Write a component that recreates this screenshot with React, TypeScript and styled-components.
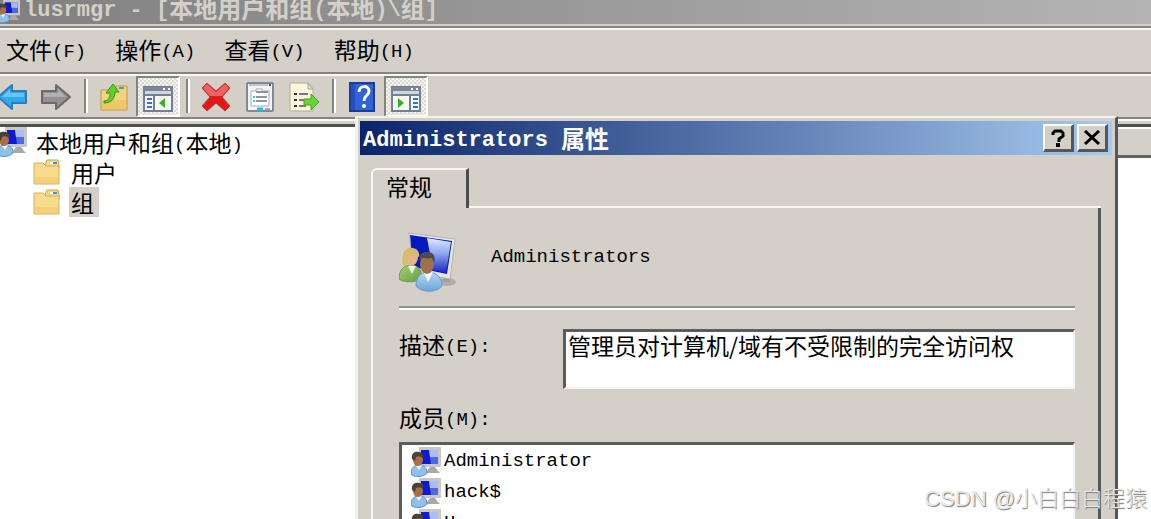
import React from 'react';
import styled, { createGlobalStyle, css } from 'styled-components';

const face = '#d4d0c8';
const cjk = '"Noto Sans CJK SC", sans-serif';

const GlobalStyle = createGlobalStyle`
  * { box-sizing: border-box; }
  body { margin: 0; background: ${face}; color: #000; font-family: ${cjk}; font-size: 23px; overflow: hidden; }
  button { font: inherit; color: inherit; background: none; border: 0; padding: 0; margin: 0; }
  svg { display: block; flex: none; }
`;

const Window = styled.main`
  position: relative;
  height: 100vh;
  display: flex;
  flex-direction: column;
  overflow: hidden;
  background: ${face};
`;

const Latin = styled.span<{ $strong?: boolean }>`
  font-family: "Liberation Mono", monospace;
  font-size: ${p => (p.$strong ? 22 : 19)}px;
  line-height: 1;
  vertical-align: 2px;
  white-space: pre;
`;

/* Sets the half-width characters of a string in the monospaced face. */
function Mixed({ text, strong }: { text: string; strong?: boolean }) {
  return (
    <>
      {text.split(/([\x20-\x7e]+)/).filter(Boolean).map((run, i) =>
        /^[\x20-\x7e]/.test(run) ? <Latin key={i} $strong={strong}>{run}</Latin> : run
      )}
    </>
  );
}

const TitleBar = styled.header`
  display: flex;
  gap: 4px;
  height: 24px;
  overflow: hidden;
  background: linear-gradient(90deg, #808080, #b4b4b4);
  color: ${face};
`;

const WindowTitle = styled.h1`
  margin: 0;
  font-size: 24px;
  font-weight: 700;
  line-height: 12px;
  white-space: nowrap;
`;

const IconSlot = styled.span<{ $w: number }>`
  display: flex;
  justify-content: flex-end;
  flex: none;
  width: ${p => p.$w}px;
  overflow: hidden;
`;

const Rule = styled.div`
  flex: none;
  height: 4px;
  border-top: 2px solid #85837f;
  border-bottom: 2px solid #fbfaf8;
`;

const TitleRule = styled(Rule)`
  margin-top: 2px;
`;

const MenuBar = styled.nav`
  display: flex;
  align-items: center;
  gap: 29px;
  height: 42px;
  padding: 0 0 4px 6px;
`;

const MenuItem = styled.button`
  line-height: 32px;
  white-space: nowrap;
`;

const ToolBar = styled.div`
  display: flex;
  align-items: stretch;
  height: 41px;
  margin-left: -10px;
`;

const ToolButton = styled.button<{ $pressed?: boolean }>`
  display: flex;
  align-items: center;
  justify-content: center;
  width: 44px;
  border: 2px solid transparent;
  ${p => p.$pressed && css`
    border-color: #85837f #fff #fff #85837f;
    padding-top: 4px;
    background: repeating-conic-gradient(#f4f2ef 0 25%, #dedbd5 0 50%) 0 0 / 4px 4px;
  `}
`;

const Separator = styled.span`
  width: 4px;
  margin: 3px 4px 4px 6px;
  border-left: 2px solid #85837f;
  border-right: 2px solid #fff;
`;

const Panes = styled.div`
  display: flex;
  flex: 1;
  margin-top: 3px;
  border-top: 3px solid #50504e;
  background: #fff;
`;

const Tree = styled.ul`
  list-style: none;
  margin: 0;
  padding: 0;
  flex: 1;
`;

const TreeRow = styled.li<{ $child?: boolean }>`
  display: flex;
  align-items: center;
  gap: ${p => (p.$child ? 9 : 7)}px;
  height: 30px;
  padding-left: ${p => (p.$child ? 33 : 0)}px;
  white-space: nowrap;
`;

const TreeLabel = styled.span<{ $selected?: boolean }>`
  line-height: 30px;
  padding: 0 5px 0 2px;
  background: ${p => (p.$selected ? face : 'transparent')};
`;

const ResultPane = styled.section`
  flex: 1;
`;

const ColumnHeader = styled.div`
  height: 31px;
  background: ${face};
  border-top: 2px solid #fff;
  border-bottom: 3px solid #62625f;
`;

const Dialog = styled.section`
  position: absolute;
  top: 116px;
  left: 355px;
  right: 33px;
  bottom: 0;
  display: flex;
  flex-direction: column;
  padding: 3px 3px 0 2px;
  background: ${face};
  border-top: 2px solid #f4f2ee;
  border-left: 3px solid #f4f2ee;
  border-right: 3px solid #55585a;
`;

const DialogBar = styled.header`
  display: flex;
  flex: none;
  align-items: center;
  gap: 3px;
  height: 34px;
  padding: 0 4px 0 3px;
  background: linear-gradient(90deg, #0a246a, #a6caf0);
  color: #fff;
`;

const DialogTitle = styled.h2`
  flex: 1;
  margin: 0;
  font-size: 24px;
  font-weight: 700;
  line-height: 34px;
  white-space: nowrap;
`;

const CaptionButton = styled.button`
  display: flex;
  align-items: center;
  justify-content: center;
  width: 31px;
  height: 28px;
  background: ${face};
  border: solid;
  border-width: 2px 3px 3px 2px;
  border-color: #fff #55585a #55585a #fff;
`;

const TabStrip = styled.div`
  display: flex;
  flex: none;
  height: 40px;
  margin: 13px 0 0 11px;
`;

const Tab = styled.button`
  display: flex;
  width: 98px;
  padding-left: 13px;
  line-height: 32px;
  border: solid;
  border-width: 2px 3px 0 2px;
  border-color: #f8f7f4 #4c4c4c #4c4c4c #f8f7f4;
  border-top-left-radius: 6px;
`;

const TabLine = styled.span`
  flex: 1;
  margin-right: 11px;
  border-bottom: 2px solid #f8f7f4;
`;

const TabPanel = styled.div`
  flex: 1;
  min-height: 0;
  display: flex;
  flex-direction: column;
  margin: 0 11px;
  padding: 24px 23px 0 26px;
  border-left: 2px solid #f8f7f4;
  border-right: 3px solid #55585a;
`;

const GroupHead = styled.div`
  display: flex;
  flex: none;
  align-items: center;
  gap: 32px;
  height: 76px;
  padding-bottom: 14px;
  border-bottom: 2px solid #919191;
  box-shadow: 0 2px 0 #fff;
`;

const GroupName = styled.span`
  line-height: 24px;
  padding-bottom: 16px;
`;

const Field = styled.div`
  display: flex;
  flex: none;
  margin-top: 21px;
`;

const MembersCaption = styled.div`
  flex: none;
  display: flex;
  margin-top: 13px;
`;

const Label = styled.label<{ $w?: number }>`
  flex: none;
  width: ${p => (p.$w ? p.$w + 'px' : 'auto')};
  line-height: 30px;
`;

const sunken = css`
  background: #fff;
  border: solid;
  border-width: 3px 2px 2px 3px;
  border-color: #5c5c5a #f4f3ef #f4f3ef #5c5c5a;
`;

const Description = styled.textarea`
  ${sunken}
  flex: 1;
  min-width: 0;
  height: 60px;
  margin: 0;
  padding: 0 2px;
  resize: none;
  outline: 0;
  border-radius: 0;
  overflow: hidden;
  color: #000;
  font: 23px/26px ${cjk};
`;

const MemberList = styled.ul`
  ${sunken}
  border-bottom: 0;
  flex: 1;
  margin: 10px 0 0;
  padding: 1px 0 0 9px;
  list-style: none;
  overflow: hidden;
`;

const Member = styled.li`
  display: flex;
  align-items: center;
  gap: 3px;
  height: 31px;
`;

const Watermark = styled.div`
  position: absolute;
  right: 4px;
  bottom: 4px;
  font: 300 22px/32px "Liberation Sans", ${cjk};
  color: #e9e8e6;
  text-shadow: 1px 1px 1px #777;
  white-space: nowrap;
`;

const UserIcon = ({ size = 30 }: { size?: number }) => (
  <svg width={size} height={size} viewBox="0 0 30 30" aria-hidden="true">
    <path d="M16 24l3-4h5l3 4 2 2H15z" fill="#a9a9a5" />
    <path d="M8 0h22v20H8z" fill="#c9c8c2" />
    <path d="M10 3h17v14H10z" fill="#1018d0" />
    <path d="M18 3h9v14h-7z" fill="#4b68e8" />
    <path d="M18 3h9v7h-8z" fill="#a9bdfa" />
    <path d="M0 27c0-6 3-9 8-9 6 0 8 4 8 8-3 4-13 5-16 1z" fill="#8fc0ea" stroke="#5b92c4" />
    <path d="M5 19l3 4 3-5z" fill="#edf5fb" />
    <ellipse cx="7" cy="13" rx="5" ry="6" fill="#a96f45" />
    <path d="M1 12c-1-6 3-8 7-7 4 0 5 3 4 6-3-2-5-2-7-1l-1 4z" fill="#4a4038" />
  </svg>
);

const GroupIcon = () => (
  <svg width="60" height="60" viewBox="0 0 60 60" aria-hidden="true">
    <defs>
      <linearGradient id="glow" x1="0" y1="0" x2="0" y2="1">
        <stop offset="0" stopColor="#dfe9ff" />
        <stop offset=".45" stopColor="#8da5f0" />
        <stop offset="1" stopColor="#1424c0" />
      </linearGradient>
      <linearGradient id="green" x1="0" y1="0" x2="1" y2="1">
        <stop offset="0" stopColor="#a9d47b" />
        <stop offset="1" stopColor="#5f9c3c" />
      </linearGradient>
      <linearGradient id="blue" x1="0" y1="0" x2="0" y2="1">
        <stop offset="0" stopColor="#b4d8f6" />
        <stop offset="1" stopColor="#6ea5d8" />
      </linearGradient>
    </defs>
    <ellipse cx="48" cy="50" rx="9" ry="4" fill="#b3afa8" />
    <path d="M44 44h6l1 6h-8z" fill="#a09f9c" />
    <path d="M10 1l46 6-5 40-36-7z" fill="#e6e6e4" stroke="#b5b4b0" />
    <path d="M11 3l42 6-5 33-34-7z" fill="#0818c0" />
    <path d="M28 6l24 4-5 31-13-3z" fill="url(#glow)" />
    <path d="M0 47c0-9 4-13 11-14 8 0 12 5 12 12-4 6-18 6-23 2z" fill="url(#green)" stroke="#6b9a48" />
    <path d="M9 34l4 8 4-8z" fill="#eef4e4" />
    <ellipse cx="12" cy="25" rx="7" ry="9" fill="#e3b48a" />
    <path d="M4 33c-2-8 0-17 8-17 7 0 9 5 8 9-4-3-8-3-11-2-1 4 0 8-2 11z" fill="#d6bd68" />
    <path d="M17 54c0-9 5-14 12-14 8 0 14 5 14 14-5 7-21 7-26 0z" fill="url(#blue)" stroke="#6c9cc8" />
    <path d="M25 41l4 9 5-10z" fill="#f1f7fc" />
    <ellipse cx="28" cy="32" rx="7" ry="10" fill="#a06f4c" />
    <path d="M21 30c-2-6 1-10 7-10 6 0 9 3 7 11-1-3-2-5-3-5-4 1-7 0-9 0z" fill="#4d4d4f" />
  </svg>
);

const FolderIcon = () => (
  <svg width="27" height="27" viewBox="0 0 27 27" aria-hidden="true">
    <path d="M12 6l2-5h11l1 4v5H12z" fill="#f3d98c" stroke="#c9a24a" />
    <path d="M17 3h6v2h-6z" fill="#fff" />
    <path d="M20 3h4v2h-4z" fill="#3d95d8" />
    <path d="M1 4h9l3 3h13v18H1z" fill="#f8dc8e" stroke="#d6b15a" />
    <path d="M2 18h23v6H2z" fill="#f3d07a" />
  </svg>
);

const ArrowIcon = ({ right }: { right?: boolean }) => (
  <svg width="30" height="28" viewBox="0 0 30 28" aria-hidden="true">
    <path
      d={right ? 'M1 8h14V2l14 12-14 12v-6H1z' : 'M29 8H15V2L1 14l14 12v-6h14z'}
      fill={right ? '#929292' : '#2fa9f0'} stroke={right ? '#6a6a6a' : '#2f7cb8'} strokeWidth="2" strokeLinejoin="round"
    />
    <path d={right ? 'M3 10h14V6l8 8H3z' : 'M27 10H13V6l-8 8h22z'} fill={right ? '#b0b0b0' : '#6cc6fa'} />
  </svg>
);

const FolderUpIcon = () => (
  <svg width="28" height="30" viewBox="0 0 28 30" aria-hidden="true">
    <path d="M1 8h12l3-4h11v24H1z" fill="#f5d27c" stroke="#c39a43" />
    <path d="M2 18h24v9H2z" fill="#eec76a" />
    <path d="M19 5h5v2h-5z" fill="#4b9dda" />
    <path d="M4 19c4 0 6-3 6-8H6l7-9 6 8h-4c0 7-4 11-11 11z" fill="#5fd02c" stroke="#369317" strokeLinejoin="round" />
  </svg>
);

const PaneIcon = ({ right }: { right?: boolean }) => (
  <svg width="30" height="26" viewBox="0 0 30 26" aria-hidden="true">
    <path d="M1 1h28v24H1z" fill="#f4f6f8" stroke="#74808f" strokeWidth="2" />
    <path d="M1 1h28v4H1z" fill="#7b8798" />
    <path d="M2 5h26v4H2z" fill="#d0d6de" />
    <path d="M20 2h2v2h-2zM25 2h2v2h-2z" fill="#fff" />
    <path d="M1 9h28" stroke="#74808f" strokeWidth="2" />
    <path d={right ? 'M19 10v15' : 'M11 10v15'} stroke="#74808f" strokeWidth="2" />
    <path d={right ? 'M22 13h5M22 17h5M22 21h5' : 'M4 13h5M4 17h5M4 21h5'} stroke="#3474c4" strokeWidth="2" />
    <path d={right ? 'M7 12v10l6-5z' : 'M22 12v10l-6-5z'} fill="#3fae20" />
  </svg>
);

const DeleteIcon = () => (
  <svg width="30" height="30" viewBox="0 0 30 30" aria-hidden="true">
    <path d="M6 1l9 8 9-8 5 5-8 9 8 9-5 5-9-8-9 8-5-5 8-9-8-9z" fill="#e01818" stroke="#b84040" strokeLinejoin="round" />
    <path d="M6 2l9 8 9-8 4 4-7 8H9L2 6z" fill="#ee6262" />
  </svg>
);

const PropertiesIcon = () => (
  <svg width="28" height="30" viewBox="0 0 28 30" aria-hidden="true">
    <rect x="1" y="1" width="26" height="28" rx="1" fill="#f2f4f6" stroke="#808a94" strokeWidth="2" />
    <path d="M3 3h19" stroke="#bcc4cc" strokeWidth="2" /><path d="M23 3h2" stroke="#445" strokeWidth="2" />
    <path d="M5 9h5V7h6v2h7v15H5z" fill="#fff" stroke="#a3adba" strokeWidth="1" />
    <path d="M10 15h11M10 19h11M10 10h12" stroke="#8995a5" strokeWidth="2" />
    <path d="M7 15h2M7 19h2" stroke="#39c5ec" strokeWidth="2" />
    <path d="M11 27h6" stroke="#19c8f5" strokeWidth="3" /><path d="M19 27h5" stroke="#9eabb6" strokeWidth="2" />
  </svg>
);

const ExportIcon = () => (
  <svg width="31" height="30" viewBox="0 0 31 30" aria-hidden="true">
    <path d="M1 1h18l5 6v22H1z" fill="#fbf7dc" stroke="#b1aa91" />
    <path d="M19 1v6h5z" fill="#e0dfda" stroke="#a5a39c" />
    <path d="M5 12h3M5 18h3M5 24h3" stroke="#333" strokeWidth="2" />
    <path d="M10 12h9M10 18h7M10 24h7" stroke="#7d7192" strokeWidth="2" />
    <path d="M15 17h7v-5l8 8-8 8v-5h-7z" fill="#6ad436" stroke="#48a51f" strokeLinejoin="round" />
  </svg>
);

const HelpIcon = () => (
  <svg width="26" height="30" viewBox="0 0 26 30" aria-hidden="true">
    <path d="M1 1h24v28H1z" fill="#3262d8" stroke="#1d3b9c" strokeWidth="2" />
    <path d="M2 2h4v26H2z" fill="#2450c0" />
    <path d="M10 10c0-7 10-7 10-1 0 5-5 4-5 10" fill="none" stroke="#fff" strokeWidth="3" />
    <circle cx="15" cy="24" r="2" fill="#fff" />
  </svg>
);

const HelpMark = () => (
  <svg width="16" height="18" viewBox="0 0 16 18" aria-hidden="true">
    <path d="M3 6V4l2-2h6l2 2v3l-4 3v3" fill="none" stroke="#000" strokeWidth="3" />
    <path d="M6 14h4v4H6z" />
  </svg>
);

const CloseMark = () => (
  <svg width="18" height="16" viewBox="0 0 18 16" aria-hidden="true">
    <path d="M2 1l14 13M16 1L2 14" stroke="#000" strokeWidth="3" />
  </svg>
);

export default function App() {
  return (
    <Window>
      <GlobalStyle />
      <TitleBar>
        <IconSlot $w={20}><UserIcon size={23} /></IconSlot>
        <WindowTitle><Mixed strong text="lusrmgr - [本地用户和组(本地)\组]" /></WindowTitle>
      </TitleBar>
      <TitleRule />
      <MenuBar aria-label="菜单">
        {['文件(F)', '操作(A)', '查看(V)', '帮助(H)'].map(m => (
          <MenuItem key={m}><Mixed text={m} /></MenuItem>
        ))}
      </MenuBar>
      <Rule />
      <ToolBar role="toolbar">
        <ToolButton aria-label="后退"><ArrowIcon /></ToolButton>
        <ToolButton aria-label="前进"><ArrowIcon right /></ToolButton>
        <Separator />
        <ToolButton aria-label="向上"><FolderUpIcon /></ToolButton>
        <ToolButton aria-label="控制台树" aria-pressed $pressed><PaneIcon /></ToolButton>
        <Separator />
        <ToolButton aria-label="删除"><DeleteIcon /></ToolButton>
        <ToolButton aria-label="属性"><PropertiesIcon /></ToolButton>
        <ToolButton aria-label="导出列表"><ExportIcon /></ToolButton>
        <Separator />
        <ToolButton aria-label="帮助"><HelpIcon /></ToolButton>
        <ToolButton aria-label="操作窗格" aria-pressed $pressed><PaneIcon right /></ToolButton>
      </ToolBar>
      <Rule />
      <Panes>
        <Tree>
          <TreeRow>
            <IconSlot $w={27}><UserIcon /></IconSlot>
            <TreeLabel><Mixed text="本地用户和组(本地)" /></TreeLabel>
          </TreeRow>
          <TreeRow $child><FolderIcon /><TreeLabel>用户</TreeLabel></TreeRow>
          <TreeRow $child><FolderIcon /><TreeLabel $selected>组</TreeLabel></TreeRow>
        </Tree>
        <ResultPane><ColumnHeader /></ResultPane>
      </Panes>

      <Dialog role="dialog" aria-labelledby="dialog-title">
        <DialogBar>
          <DialogTitle id="dialog-title"><Mixed strong text="Administrators 属性" /></DialogTitle>
          <CaptionButton aria-label="帮助"><HelpMark /></CaptionButton>
          <CaptionButton aria-label="关闭"><CloseMark /></CaptionButton>
        </DialogBar>
        <TabStrip role="tablist">
          <Tab role="tab" aria-selected>常规</Tab>
          <TabLine />
        </TabStrip>
        <TabPanel role="tabpanel">
          <GroupHead>
            <GroupIcon />
            <GroupName><Mixed text="Administrators" /></GroupName>
          </GroupHead>
          <Field>
            <Label htmlFor="description" $w={164}><Mixed text="描述(E):" /></Label>
            <Description id="description" defaultValue="管理员对计算机/域有不受限制的完全访问权" spellCheck={false} />
          </Field>
          <MembersCaption>
            <Label as="span" id="members"><Mixed text="成员(M):" /></Label>
          </MembersCaption>
          <MemberList aria-labelledby="members">
            {['Administrator', 'hack$', 'H'].map(name => (
              <Member key={name}><UserIcon /><Mixed text={name} /></Member>
            ))}
          </MemberList>
        </TabPanel>
      </Dialog>
      <Watermark>CSDN @小白白白程猿</Watermark>
    </Window>
  );
}
